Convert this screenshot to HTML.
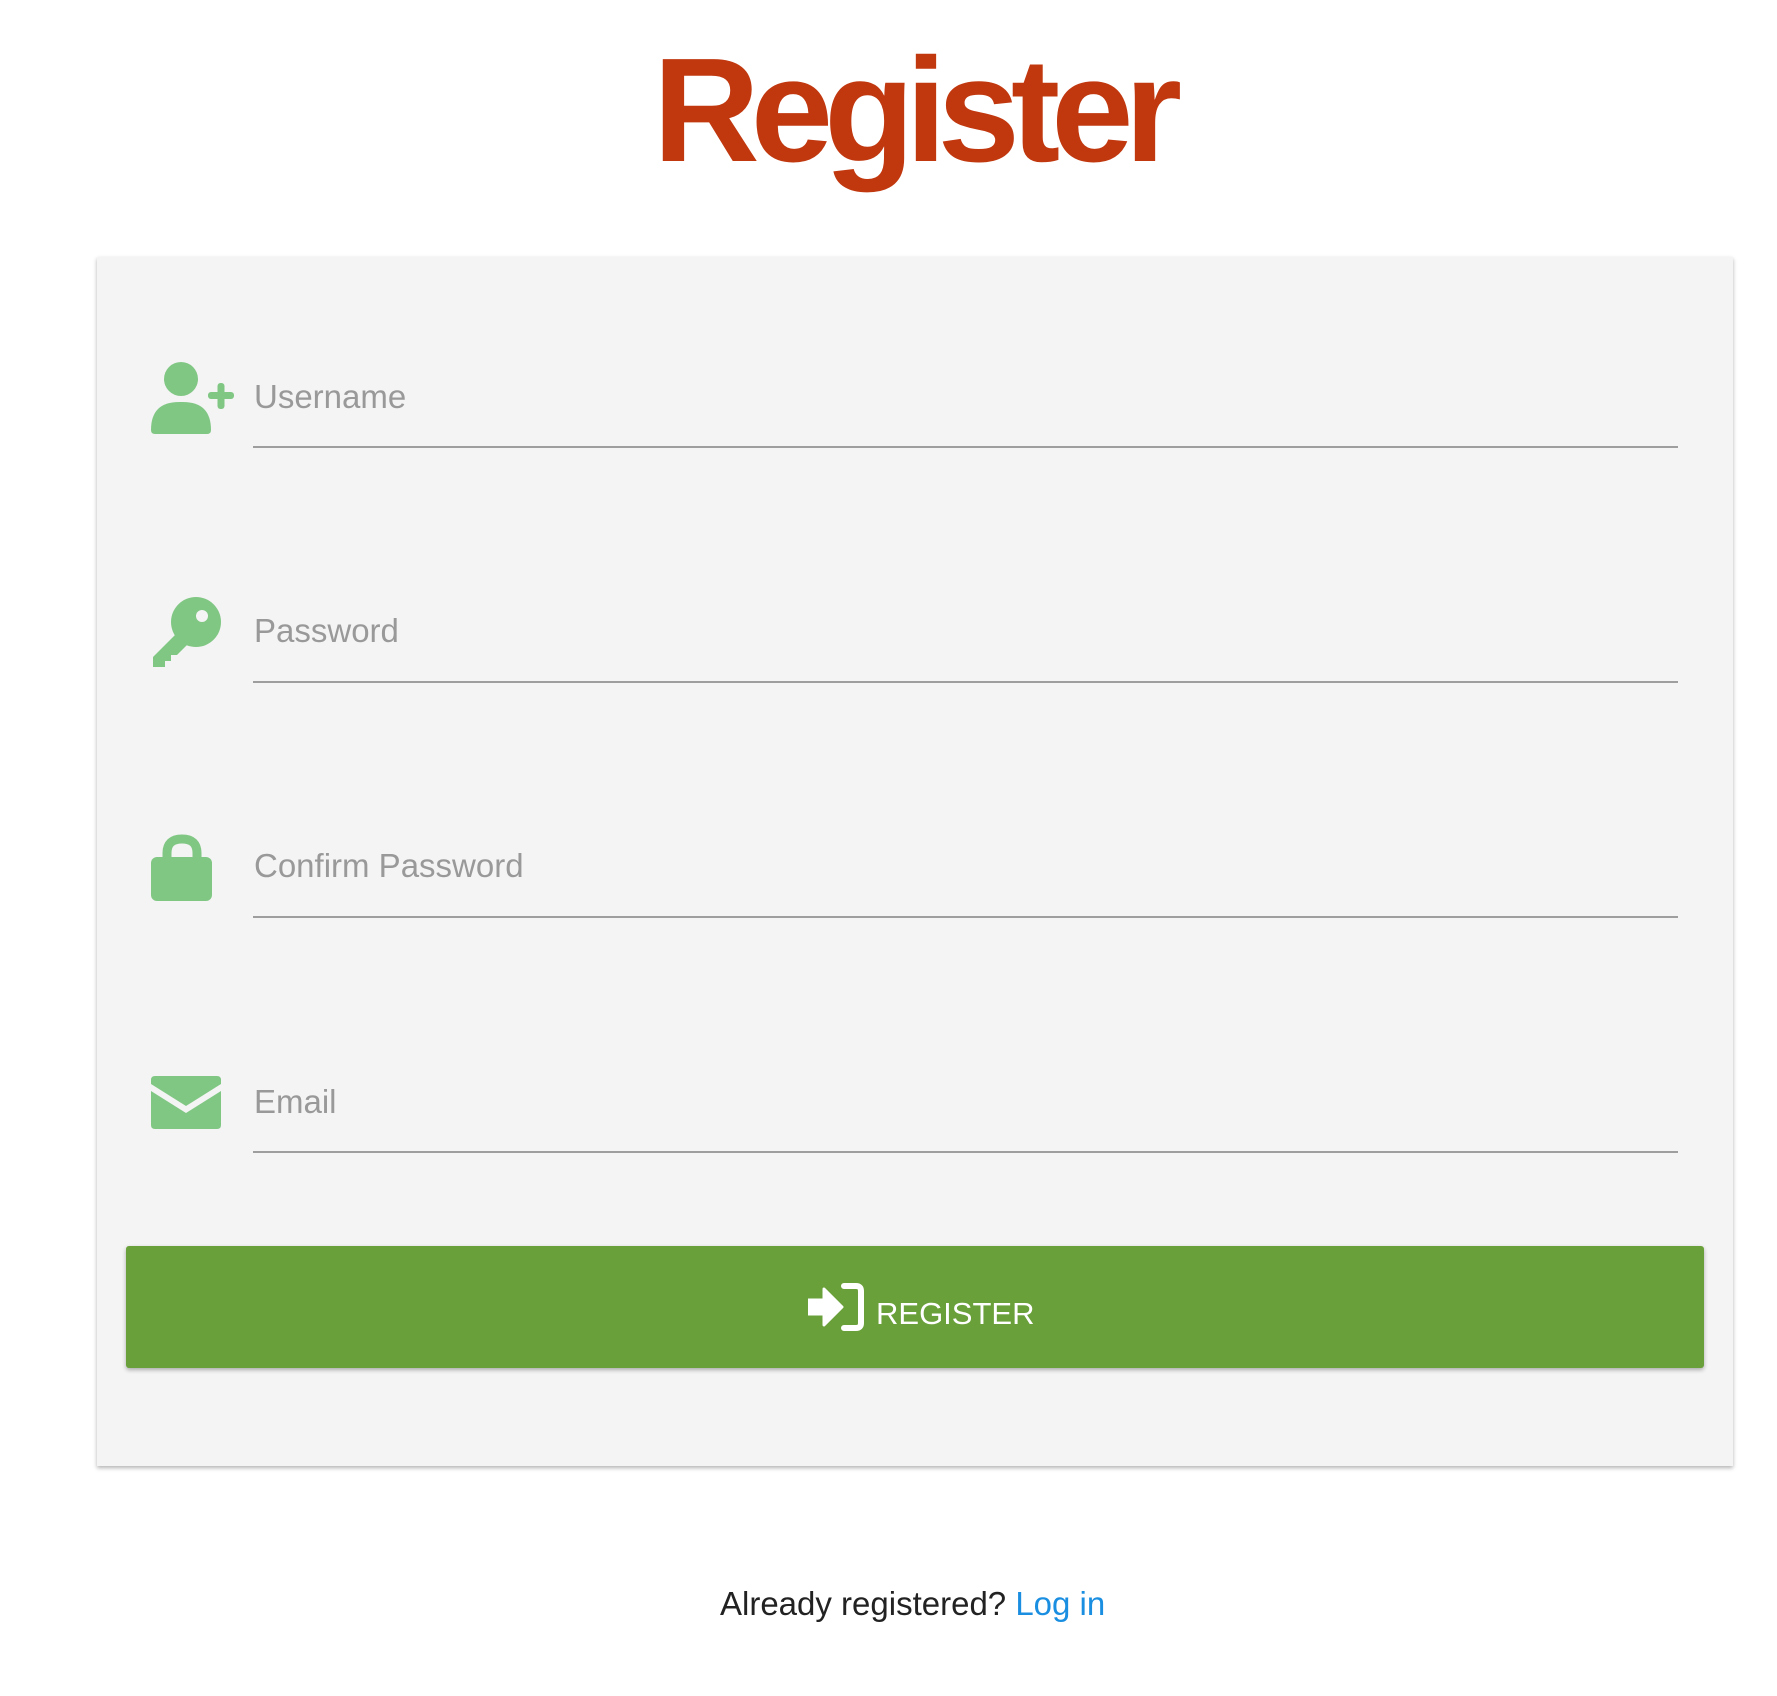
<!DOCTYPE html>
<html><head><meta charset="utf-8"><style>
html,body{margin:0;padding:0;background:#fff;width:1777px;height:1696px;overflow:hidden;position:relative;font-family:"Liberation Sans",sans-serif}
.title{position:absolute;left:0;width:1826px;top:26px;text-align:center;font-size:148px;font-weight:bold;color:#c1380f;letter-spacing:-9px;line-height:170px}
.card{position:absolute;left:97px;top:257px;width:1645px;height:1217px;background:#f4f4f4;box-shadow:0 2px 4px rgba(0,0,0,.3)}
.ph{position:absolute;left:254px;font-size:33px;color:#999}
.line{position:absolute;left:253px;width:1434px;height:2px;background:#9e9e9e}
svg.i{position:absolute;fill:#81c784}
.btn{position:absolute;left:126px;top:1253px;width:1586px;height:122px;background:#6aa03a;border-radius:3px;box-shadow:0 2px 4px rgba(0,0,0,.3)}
.btxt{position:absolute;left:877px;top:1304px;font-size:32px;color:#fff}
.foot{position:absolute;left:722px;top:1590px;font-size:33px;color:#222}
.foot span{color:#1a8ee0}
</style></head><body>
<div class="title">Register</div>
<div class="card" style="width:1636px;height:1209px"></div>

<svg class="i" style="left:151px;top:362px" width="88" height="72" viewBox="0 0 88 72"><circle cx="30" cy="17" r="17"/><path d="M0 68 Q0 40 28 40 H32 Q60 40 60 68 Q60 72 56 72 H4 Q0 72 0 68Z"/><rect x="57" y="30" width="26" height="7" rx="3"/><rect x="66.5" y="21" width="7" height="26" rx="3"/></svg>
<div class="ph" style="top:378px">Username</div>
<div class="line" style="top:446px;width:1425px"></div>

<svg class="i" style="left:151px;top:597px" width="70" height="70" viewBox="0 0 70 70"><circle cx="45" cy="25" r="25"/><path d="M24 38 L2 60 V70 H14 V64 H20 V58 H26 L36 48Z"/><circle cx="51" cy="19" r="6" fill="#f4f4f4"/></svg>
<div class="ph" style="top:612px">Password</div>
<div class="line" style="top:681px;width:1425px"></div>

<svg class="i" style="left:151px;top:833px" width="62" height="68" viewBox="0 0 62 68"><path d="M16 26 V20 Q16 6 31 6 Q46 6 46 20 V26" fill="none" stroke="#81c784" stroke-width="9"/><rect x="0" y="24" width="61" height="44" rx="6"/></svg>
<div class="ph" style="top:847px">Confirm Password</div>
<div class="line" style="top:916px;width:1425px"></div>

<svg class="i" style="left:151px;top:1076px" width="70" height="53" viewBox="0 0 70 53"><path d="M4 0 H66 Q70 0 70 4 V8 L35 30 L0 8 V4 Q0 0 4 0Z"/><path d="M0 15 L35 37 L70 15 V49 Q70 53 66 53 H4 Q0 53 0 49Z"/></svg>
<div class="ph" style="top:1083px">Email</div>
<div class="line" style="top:1151px;width:1425px"></div>

<div class="btn" style="top:1246px;width:1578px"></div>
<svg style="position:absolute;left:808px;top:1283px" width="58" height="48" viewBox="0 0 58 48"><path d="M0 17 H16 V6 L34 24 L16 42 V31 H0Z" fill="#fff" stroke="#fff" stroke-width="3" stroke-linejoin="round"/><path d="M36 3 H48 Q53 3 53 8 V40 Q53 45 48 45 H36" fill="none" stroke="#fff" stroke-width="6" stroke-linecap="round"/></svg>
<div class="btxt" style="top:1296px;left:876px;font-size:31px">REGISTER</div>

<div class="foot" style="top:1585px;left:720px">Already registered? <span>Log in</span></div>
</body></html>
